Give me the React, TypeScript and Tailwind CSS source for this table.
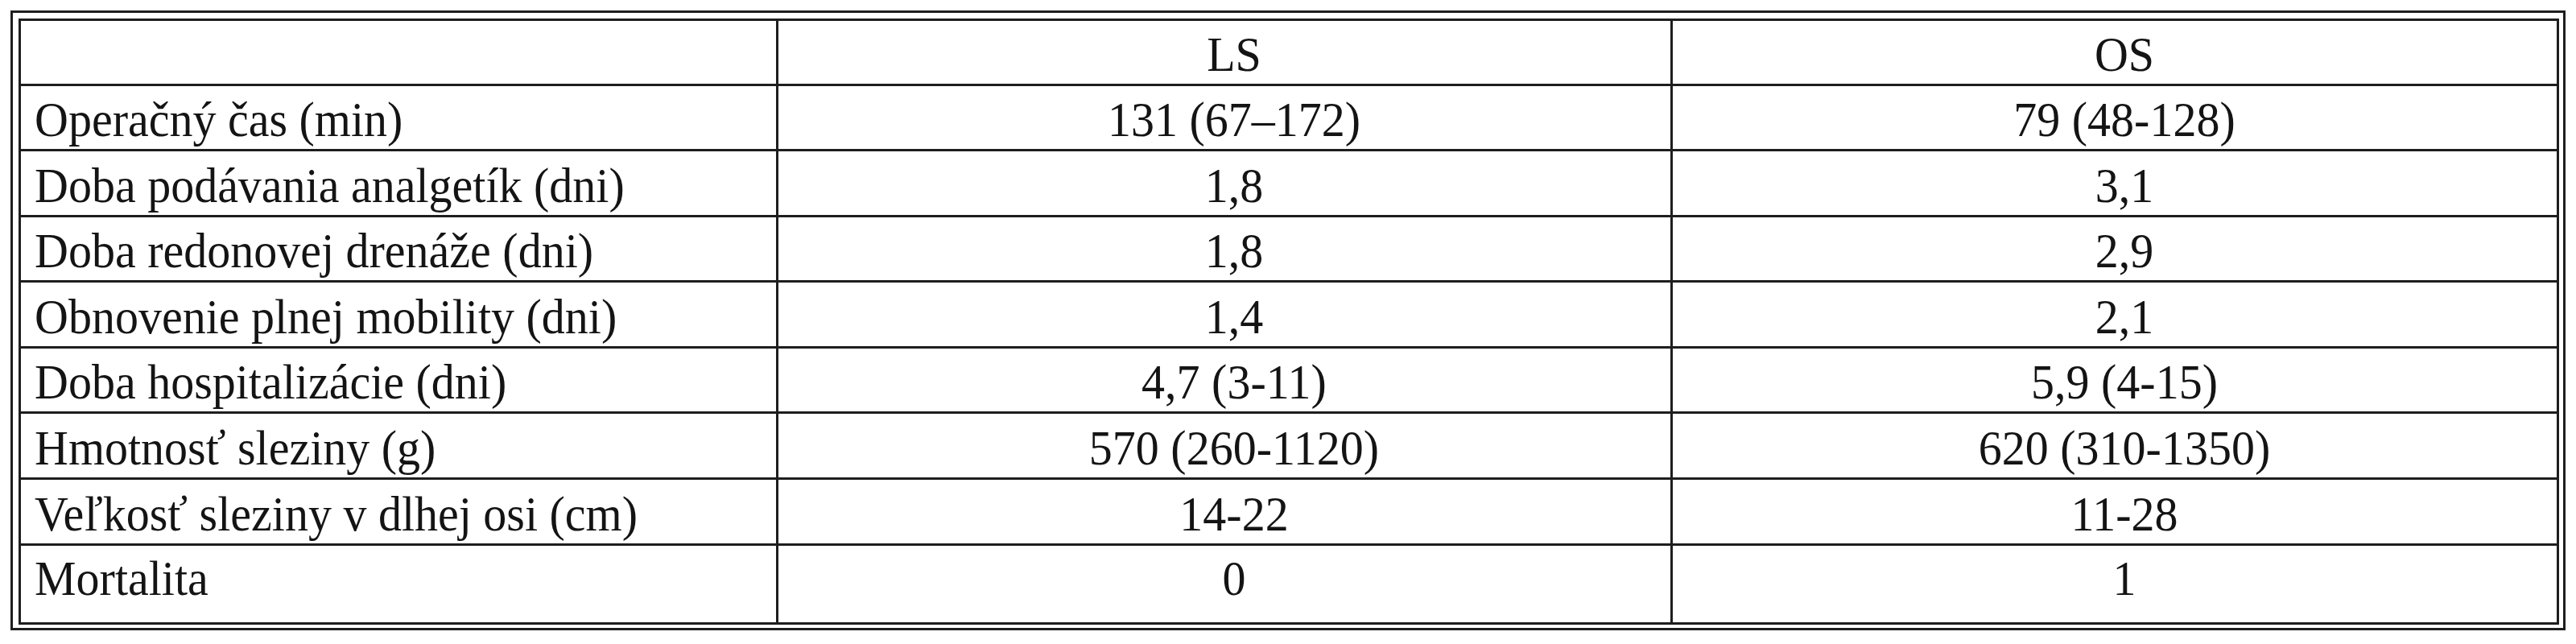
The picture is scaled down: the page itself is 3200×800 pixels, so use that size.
const rows = [
  { label: "Operačný čas (min)", ls: "131 (67–172)", os: "79 (48-128)", h: "h-[81px]" },
  { label: "Doba podávania analgetík (dni)", ls: "1,8", os: "3,1", h: "h-[82px]" },
  { label: "Doba redonovej drenáže (dni)", ls: "1,8", os: "2,9", h: "h-[81px]" },
  { label: "Obnovenie plnej mobility (dni)", ls: "1,4", os: "2,1", h: "h-[82px]" },
  { label: "Doba hospitalizácie (dni)", ls: "4,7 (3-11)", os: "5,9 (4-15)", h: "h-[81px]" },
  { label: "Hmotnosť sleziny (g)", ls: "570 (260-1120)", os: "620 (310-1350)", h: "h-[82px]" },
  { label: "Veľkosť sleziny v dlhej osi (cm)", ls: "14-22", os: "11-28", h: "h-[82px]" },
];

// the scanned table uses a slightly taller Times, so stretch the glyphs a bit
const Txt = ({ children }: { children: React.ReactNode }) => (
  <span className="inline-block scale-y-[1.07] whitespace-nowrap">{children}</span>
);

const App = () => {
  return (
    <div className="h-[800px] w-[3200px] bg-white pl-[13px] pt-[13px] font-['Liberation_Serif','Times_New_Roman',serif] text-[58px] leading-none text-[#141414]">
      {/* outer frame */}
      <div className="h-[770px] w-[3174px] border-[3px] border-[#1e1e1e] pb-[4px] pl-[7px] pr-[4px] pt-[7px]">
        {/* inner table */}
        <div className="flex h-[753px] w-[3156px] flex-col border-[3px] border-[#1e1e1e]">
          {/* header */}
          <div className="flex h-[81px] border-b-[3px] border-[#1e1e1e]">
            <div className="w-[941px] border-r-[3px] border-[#1e1e1e]" />
            <div className="flex w-[1111px] items-center justify-center border-r-[3px] border-[#1e1e1e] pl-[24px] pt-[5px]">
              <Txt>LS</Txt>
            </div>
            <div className="flex flex-1 items-center justify-center pl-[24px] pt-[5px]">
              <Txt>OS</Txt>
            </div>
          </div>

          {rows.map((row) => (
            <div key={row.label} className={`flex ${row.h} border-b-[3px] border-[#1e1e1e]`}>
              <div className="flex w-[941px] items-center border-r-[3px] border-[#1e1e1e] pl-[17px] pt-[6px]">
                <Txt>{row.label}</Txt>
              </div>
              <div className="flex w-[1111px] items-center justify-center border-r-[3px] border-[#1e1e1e] pl-[24px] pt-[6px]">
                <Txt>{row.ls}</Txt>
              </div>
              <div className="flex flex-1 items-center justify-center pl-[24px] pt-[6px]">
                <Txt>{row.os}</Txt>
              </div>
            </div>
          ))}

          {/* last row is taller, text sits in the upper part */}
          <div className="flex flex-1">
            <div className="flex w-[941px] items-center border-r-[3px] border-[#1e1e1e] pb-[20px] pl-[17px] pt-[6px]">
              <Txt>Mortalita</Txt>
            </div>
            <div className="flex w-[1111px] items-center justify-center border-r-[3px] border-[#1e1e1e] pb-[20px] pl-[24px] pt-[6px]">
              <Txt>0</Txt>
            </div>
            <div className="flex flex-1 items-center justify-center pb-[20px] pl-[24px] pt-[6px]">
              <Txt>1</Txt>
            </div>
          </div>
        </div>
      </div>
    </div>
  );
};

export default App;
